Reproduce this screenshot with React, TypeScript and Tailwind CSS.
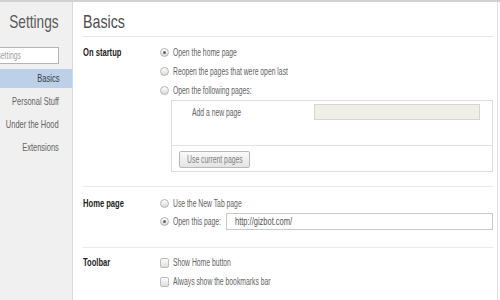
import type { ReactNode } from "react";

// the reference font is very narrow, so text is squeezed horizontally
function T({ children, className = "" }: { children: ReactNode; className?: string }) {
  return <span className={"inline-block whitespace-nowrap " + className}>{children}</span>;
}

function Radio({ checked }: { checked?: boolean }) {
  return (
    <span className="w-[9px] h-[9px] shrink-0 rounded-full border border-[#b4b4b4] bg-linear-to-b from-white to-[#dadada] flex items-center justify-center">
      {checked && <span className="w-[3px] h-[3px] rounded-full bg-[#666]" />}
    </span>
  );
}

function Checkbox() {
  return <span className="w-[9px] h-[10px] shrink-0 rounded-[2px] border border-[#bcbcbc] bg-linear-to-b from-white to-[#dedede]" />;
}

function Option({ checked, label }: { checked?: boolean; label: string }) {
  return (
    <div className="h-[19px] flex items-center gap-[4px]">
      <Radio checked={checked} />
      <T className="origin-left scale-x-[0.68]">{label}</T>
    </div>
  );
}

function Check({ label }: { label: string }) {
  return (
    <div className="h-[19px] flex items-center gap-[4px]">
      <Checkbox />
      <T className="origin-left scale-x-[0.68]">{label}</T>
    </div>
  );
}

function Label({ children, h = "h-[19px]" }: { children: ReactNode; h?: string }) {
  return (
    <div className={"w-[77px] shrink-0 flex items-center text-[10px] font-bold text-[#222] " + h}>
      <T className="origin-left scale-x-[0.76]">{children}</T>
    </div>
  );
}

const navItems = ["Basics", "Personal Stuff", "Under the Hood", "Extensions"];

export default function App() {
  return (
    <div className="w-[500px] h-[300px] overflow-hidden bg-white flex border-t-2 border-[#d2d2d2] font-['Liberation_Sans',Arial,sans-serif]">
      <aside className="w-[73px] shrink-0 bg-[#f0f0f0] border-r border-[#d9d9d9] flex flex-col items-end overflow-hidden">
        <div className="mt-[10px] mr-[13px] h-[20px] leading-[20px] text-[19px] text-[#5a5a5a]">
          <T className="origin-right scale-x-[0.72]">Settings</T>
        </div>
        <div className="mt-[15px] mr-[13px] w-[89px] h-[17px] shrink-0 border border-[#b5b5b5] bg-white flex items-center pl-[3px] text-[10px] text-[#a0a0a0]">
          <T className="origin-left scale-x-[0.68]">Search settings</T>
        </div>
        <nav className="mt-[5px] self-stretch flex flex-col gap-[4px]">
          {navItems.map((item) => (
            <div
              key={item}
              className={
                "h-[19px] flex items-center justify-end pr-[13px] text-[11px] " +
                (item === "Basics" ? "bg-[#bcd0ea] text-[#3a3a3a]" : "text-[#636363]")
              }
            >
              <T className="origin-right scale-x-[0.68]">{item}</T>
            </div>
          ))}
        </nav>
      </aside>

      <main className="flex-1 min-w-0 mr-[2px] pl-[10px] pr-[4px] border-r border-[#e3e3e3] text-[10px] text-[#636363]">
        <div className="h-[35px] pt-[10px] leading-[20px] text-[19px] text-[#505050] border-b border-[#e6e6e6]">
          <T className="origin-left scale-x-[0.75]">Basics</T>
        </div>

        {/* On startup */}
        <section className="flex pt-[6px]">
          <Label>On startup</Label>
          <div className="flex-1 min-w-0">
            <Option checked label="Open the home page" />
            <Option label="Reopen the pages that were open last" />
            <Option label="Open the following pages:" />
            <div className="ml-[11px] border border-[#dcdcdc]">
              <div className="h-[45px] border-b border-[#e2e2e2]">
                <div className="h-[22px] flex items-center justify-between pl-[20px] pr-[12px]">
                  <T className="origin-left scale-x-[0.68]">Add a new page</T>
                  <div className="w-[166px] h-[16px] bg-[#efefe8] border border-[#d6d6cc]" />
                </div>
              </div>
              <div className="pt-[5px] pb-[3px] pl-[7px]">
                <div className="w-[71px] h-[17px] rounded-[2px] border border-[#b9b9b9] bg-linear-to-b from-[#fafafa] to-[#e4e4e4] flex items-center justify-center text-[#808080]">
                  <T className="origin-center scale-x-[0.68]">Use current pages</T>
                </div>
              </div>
            </div>
          </div>
        </section>

        {/* Home page */}
        <section className="mt-[14px] border-t border-[#ebebeb] flex pt-[7px] pb-[17px]">
          <Label h="h-[18px]">Home page</Label>
          <div className="flex-1 min-w-0">
            <div className="h-[18px] flex items-center gap-[4px]">
              <Radio />
              <T className="origin-left scale-x-[0.68]">Use the New Tab page</T>
            </div>
            <div className="h-[18px] flex items-center gap-[4px]">
              <Radio checked />
              <div className="w-[49px] shrink-0">
                <T className="origin-left scale-x-[0.68]">Open this page:</T>
              </div>
              <div className="flex-1 h-[17px] border border-[#c9c9c9] bg-white flex items-center pl-[8px] text-[#555] overflow-hidden">
                <T className="origin-left scale-x-[0.75]">http://gizbot.com/</T>
              </div>
            </div>
          </div>
        </section>

        {/* Toolbar */}
        <section className="border-t border-[#ebebeb] flex pt-[5px]">
          <Label>Toolbar</Label>
          <div className="flex-1 min-w-0">
            <Check label="Show Home button" />
            <Check label="Always show the bookmarks bar" />
          </div>
        </section>
      </main>
    </div>
  );
}
